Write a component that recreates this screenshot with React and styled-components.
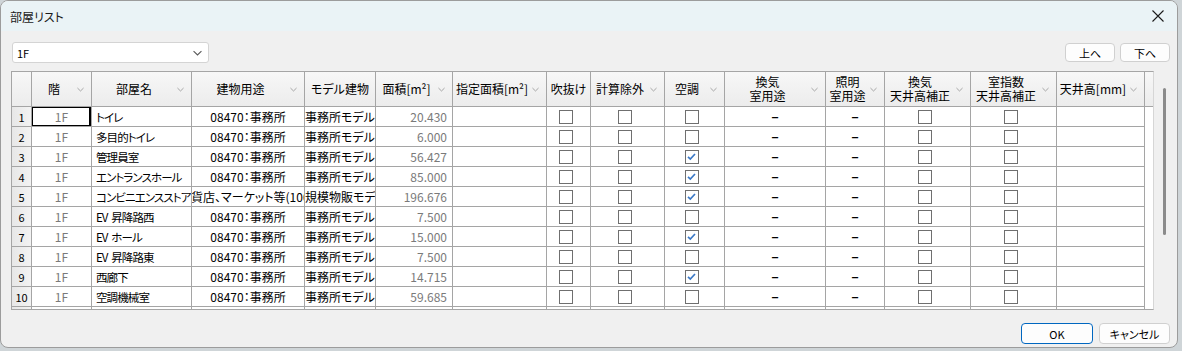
import React from "react";
import styled, { createGlobalStyle } from "styled-components";

const GlobalStyle = createGlobalStyle`
  body {
    margin: 0;
    background: #cfd5d8;
    font-family: "Noto Sans CJK JP", "Noto Sans", sans-serif;
    font-size: 12px;
    font-feature-settings: "palt";
    color: #000;
  }
`;

const columns = [
  { key: "floor", label: "階", width: 60, menu: true, kind: "text", align: "center", gray: true },
  { key: "name", label: "部屋名", width: 100, menu: true, kind: "text", align: "left", tight: true },
  { key: "use", label: "建物用途", width: 113, menu: true, kind: "text", align: "center" },
  { key: "model", label: "モデル建物", width: 71, menu: false, kind: "text", align: "center" },
  { key: "area", label: "面積[m²]", width: 77, menu: true, kind: "text", align: "right", gray: true },
  { key: "setArea", label: "指定面積[m²]", width: 94, menu: true, kind: "text", align: "right" },
  { key: "void", label: "吹抜け", width: 44, menu: false, kind: "check" },
  { key: "exclude", label: "計算除外", width: 74, menu: true, kind: "check" },
  { key: "ac", label: "空調", width: 60, menu: true, kind: "check" },
  { key: "vent", label: ["換気", "室用途"], width: 101, menu: true, kind: "dash" },
  { key: "light", label: ["照明", "室用途"], width: 59, menu: true, kind: "dash" },
  { key: "ventH", label: ["換気", "天井高補正"], width: 86, menu: true, kind: "check" },
  { key: "roomH", label: ["室指数", "天井高補正"], width: 86, menu: true, kind: "check" },
  { key: "height", label: "天井高[mm]", width: 88, menu: true, kind: "text", align: "right" },
];

const office = "08470：事務所";
const officeModel = "事務所モデル";

const rows = [
  { name: "トイレ", area: "20.430", ac: false },
  { name: "多目的トイレ", area: "6.000", ac: false },
  { name: "管理員室", area: "56.427", ac: true },
  { name: "エントランスホール", area: "85.000", ac: true },
  {
    name: "コンビニエンスストア",
    use: "06120：百貨店、マーケット等(1000㎡以上)",
    model: "大規模物販モデル",
    area: "196.676",
    ac: true,
  },
  { name: "EV 昇降路西", area: "7.500", ac: false },
  { name: "EV ホール", area: "15.000", ac: true },
  { name: "EV 昇降路東", area: "7.500", ac: false },
  { name: "西廊下", area: "14.715", ac: true },
  { name: "空調機械室", area: "59.685", ac: false },
].map((r) => ({
  floor: "1F",
  use: office,
  model: officeModel,
  setArea: "",
  void: false,
  exclude: false,
  vent: "−",
  light: "−",
  ventH: false,
  roomH: false,
  height: "",
  ...r,
}));

const template = `20px ${columns.map((c) => `${c.width}px`).join(" ")}`;

const Chevron = ({ size = 7, color = "#9a9a9a" }) => (
  <svg width={size} height={Math.ceil(size / 2) + 1} viewBox="0 0 8 5" fill="none">
    <path d="M0.5 0.8 L4 4.2 L7.5 0.8" stroke={color} strokeWidth="1" />
  </svg>
);

const CheckBox = ({ checked }) => (
  <Box>
    {checked && (
      <svg width="11" height="11" viewBox="0 0 11 11" fill="none">
        <path d="M2 5.8 L4.3 8 L9 3" stroke="#3a78c6" strokeWidth="1.7" />
      </svg>
    )}
  </Box>
);

const renderCell = (col, row) => {
  if (col.kind === "check") return <CheckBox checked={row[col.key]} />;
  if (col.kind === "dash") return <Dash>{row[col.key]}</Dash>;
  return (
    <CellText align={col.align} gray={col.gray ? 1 : 0} tight={col.tight ? 1 : 0}>
      {row[col.key]}
    </CellText>
  );
};

const App = () => {
  return (
    <>
      <GlobalStyle />
      <Window>
        <TitleBar>
          <Title>部屋リスト</Title>
          <CloseButton>
            <svg width="12" height="12" viewBox="0 0 12 12" fill="none">
              <path d="M0.5 0.5 L11.5 11.5 M11.5 0.5 L0.5 11.5" stroke="#1b1b1b" strokeWidth="1.1" />
            </svg>
          </CloseButton>
        </TitleBar>

        <Toolbar>
          <Select>
            <span>1F</span>
            <Chevron size={9} color="#5a5a5a" />
          </Select>
          <MoveButtons>
            <SmallButton>上へ</SmallButton>
            <SmallButton>下へ</SmallButton>
          </MoveButtons>
        </Toolbar>

        <GridArea>
          <GridBox>
            <HeaderRow>
              <HeaderCell />
              {columns.map((c) => (
                <HeaderCell key={c.key}>
                  <HeaderLabel>
                    {Array.isArray(c.label) ? c.label.map((l) => <div key={l}>{l}</div>) : c.label}
                  </HeaderLabel>
                  {c.menu && (
                    <MenuMark>
                      <Chevron />
                    </MenuMark>
                  )}
                </HeaderCell>
              ))}
              <HeaderFiller />
            </HeaderRow>
            {rows.map((row, i) => (
              <Row key={i}>
                <RowHead>{i + 1}</RowHead>
                {columns.map((c, ci) => (
                  <Cell key={c.key} kind={c.kind} selected={i === 0 && ci === 0 ? 1 : 0}>
                    {renderCell(c, row)}
                  </Cell>
                ))}
              </Row>
            ))}
            <Row>
              <RowHead />
              {columns.map((c) => (
                <Cell key={c.key} />
              ))}
            </Row>
          </GridBox>
          <ScrollTrack>
            <ScrollThumb />
          </ScrollTrack>
        </GridArea>

        <Footer>
          <DialogButton primary={1}>OK</DialogButton>
          <DialogButton>キャンセル</DialogButton>
        </Footer>
      </Window>
    </>
  );
};

const Window = styled.div`
  box-sizing: border-box;
  width: 1178px;
  height: 348px;
  background: #f0f0f0;
  border: 1px solid #9c9c9c;
  border-radius: 8px;
  overflow: hidden;
  display: flex;
  flex-direction: column;
`;

const TitleBar = styled.div`
  height: 30px;
  flex: none;
  display: flex;
  align-items: center;
  justify-content: space-between;
  padding: 0 0 0 9px;
  background: #eaf3f6;
`;

const Title = styled.div`
  font-size: 12px;
  color: #1a1a1a;
`;

const CloseButton = styled.div`
  width: 46px;
  height: 30px;
  display: flex;
  align-items: center;
  justify-content: center;
  margin-right: -4px;
`;

const Toolbar = styled.div`
  display: flex;
  align-items: center;
  justify-content: space-between;
  margin-top: 11px;
  padding: 0 7px 0 11px;
`;

const Select = styled.div`
  box-sizing: border-box;
  width: 197px;
  height: 21px;
  display: flex;
  align-items: center;
  justify-content: space-between;
  padding: 0 6px 0 4px;
  background: #ffffff;
  border: 1px solid #d4d4d4;
  border-radius: 3px;
  font-size: 11px;
`;

const MoveButtons = styled.div`
  display: flex;
  gap: 5px;
`;

const SmallButton = styled.div`
  box-sizing: border-box;
  width: 50px;
  height: 19px;
  display: flex;
  align-items: center;
  justify-content: center;
  background: #fdfdfd;
  border: 1px solid #d0d0d0;
  border-radius: 4px;
  font-size: 11px;
`;

const GridArea = styled.div`
  display: flex;
  margin: 8px 0 0 10px;
  height: 239px;
`;

const GridBox = styled.div`
  box-sizing: border-box;
  width: 1143px;
  height: 239px;
  overflow: hidden;
  background: #ffffff;
  border: 1px solid #a5a5a5;
  border-right-color: #d6d6d6;
`;

const HeaderRow = styled.div`
  display: grid;
  grid-template-columns: ${template} 1fr;
  height: 35px;
`;

const HeaderCell = styled.div`
  box-sizing: border-box;
  display: flex;
  align-items: center;
  border-right: 1px solid #a5a5a5;
  border-bottom: 1px solid #a5a5a5;
  background: linear-gradient(#f7f7f7, #ececec);
  overflow: hidden;
`;

const HeaderFiller = styled(HeaderCell)`
  border-right: none;
`;

const HeaderLabel = styled.div`
  flex: 1;
  text-align: center;
  font-size: 12px;
  line-height: 14px;
  white-space: nowrap;
`;

const MenuMark = styled.div`
  flex: none;
  display: flex;
  margin: 0 7px 0 1px;
`;

const Row = styled.div`
  display: grid;
  grid-template-columns: ${template};
  height: 20px;
`;

const RowHead = styled.div`
  box-sizing: border-box;
  display: flex;
  align-items: center;
  justify-content: center;
  border-right: 1px solid #a5a5a5;
  border-bottom: 1px solid #a5a5a5;
  background: linear-gradient(90deg, #e7e7e7, #f3f3f3);
  font-size: 11px;
`;

const Cell = styled.div`
  box-sizing: border-box;
  position: relative;
  display: flex;
  align-items: center;
  justify-content: center;
  padding-right: ${(p) => (p.kind === "check" ? "6px" : "0")};
  border-right: 1px solid #a5a5a5;
  border-bottom: 1px solid #a5a5a5;
  overflow: hidden;

  ${(p) =>
    p.selected &&
    `
    &::after {
      content: "";
      position: absolute;
      top: -1px;
      left: -1px;
      right: 0;
      bottom: -1px;
      border: 2px solid #000;
    }
  `}
`;

const CellText = styled.div`
  flex: 1;
  min-width: 0;
  display: flex;
  justify-content: ${(p) => (p.align === "left" ? "flex-start" : p.align === "right" ? "flex-end" : "center")};
  padding: ${(p) => (p.align === "left" ? "0 0 0 4px" : p.align === "right" ? "0 5px 0 0" : "0")};
  white-space: nowrap;
  font-size: ${(p) => (p.tight ? "11.5px" : "12px")};
  letter-spacing: ${(p) => (p.tight ? "-0.9px" : "0")};
  word-spacing: ${(p) => (p.tight ? "2px" : "0")};
  color: ${(p) => (p.gray ? "#7a7a7a" : "#000")};
`;

const Dash = styled.div`
  font-size: 12px;
  font-weight: 700;
`;

const Box = styled.div`
  box-sizing: border-box;
  width: 14px;
  height: 14px;
  display: flex;
  align-items: center;
  justify-content: center;
  background: #ffffff;
  border: 1px solid #6f6f6f;
`;

const ScrollTrack = styled.div`
  flex: none;
  width: 20px;
  display: flex;
  justify-content: center;
  padding-top: 17px;
`;

const ScrollThumb = styled.div`
  width: 3px;
  height: 147px;
  border-radius: 2px;
  background: #8b8b8b;
`;

const Footer = styled.div`
  display: flex;
  justify-content: flex-end;
  gap: 6px;
  margin-top: 13px;
  padding-right: 7px;
`;

const DialogButton = styled.div`
  box-sizing: border-box;
  width: ${(p) => (p.primary ? "72px" : "71px")};
  height: 21px;
  display: flex;
  align-items: center;
  justify-content: center;
  background: #fdfdfd;
  border: 1px solid ${(p) => (p.primary ? "#0067c0" : "#d0d0d0")};
  border-radius: 4px;
  font-size: 11px;
`;

export default App;
